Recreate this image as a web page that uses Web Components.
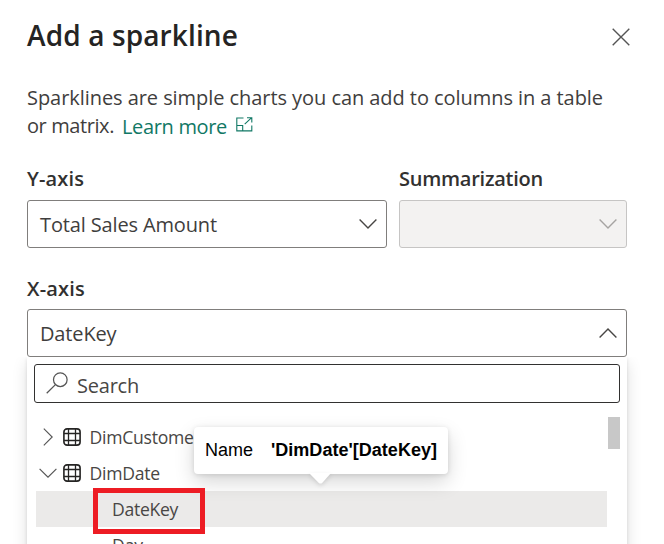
<!DOCTYPE html>
<html lang="en">
<head>
<meta charset="utf-8">
<title>Add a sparkline</title>
<style>
html,body{margin:0;height:544px;overflow:hidden;background:#fff}
body{font-family:"Open Sans","Noto Sans",sans-serif;color:#3f3e3d}
</style>
</head>
<body>
<sparkline-dialog></sparkline-dialog>
<script>
const define=(name,html,init)=>customElements.define(name,class extends HTMLElement{
  constructor(){super();this.attachShadow({mode:'open'}).innerHTML=html;}
  connectedCallback(){if(init)init.call(this,this.shadowRoot);}
});

// Single line of text whose tracking is adjusted to span the given width.
define('fit-text',`<style>:host{display:block;white-space:nowrap}span{display:inline-block;white-space:pre}</style><span><slot></slot></span>`,function(r){
  const s=r.querySelector('span'),n=this.textContent.length;
  s.style.letterSpacing=((+this.getAttribute('width')-s.getBoundingClientRect().width)/n)+'px';
});

const icons={
  close:[18,18,'<path d="M.7.7 17.3 17.3M17.3.7.7 17.3" stroke-width="1.4"/>'],
  down:[18,10,'<path d="M.6.6 9 9 17.4.6" stroke-width="1.4"/>'],
  up:[18,10,'<path d="M.6 9.4 9 1 17.4 9.4" stroke-width="1.4"/>'],
  right:[10,18,'<path d="M.8.6 9.2 9 .8 17.4" stroke-width="1.15"/>'],
  open:[18,10,'<path d="M.6.8 9 9.2 17.4.8" stroke-width="1.15"/>'],
  search:[22,22,'<circle cx="14.3" cy="7.7" r="6.8" stroke-width="1.25"/><path d="M9.4 12.6.7 21.3" stroke-width="1.25"/>'],
  table:[18,18,'<rect x=".9" y=".9" width="16.2" height="16.2" rx="3.2" stroke-width="1.6"/><path d="M5.5 1V17M12.5 1V17M1 5.5H17M1 12.5H17" stroke-width="1.3"/>'],
  popout:[17,15,'<path d="M7.5 1H.8V13.9H15.8V8.5M.8 8.5H6.7V13.9M8.7 7.2 15.4.9M11 .8H15.8V5.5" stroke-width="1.1"/>']
};
define('line-icon','<style>:host{display:block;flex:none}svg{display:block;fill:none;stroke:currentColor}</style>',function(r){
  const [w,h,p]=icons[this.getAttribute('name')];
  r.innerHTML+=`<svg width="${w}" height="${h}" viewBox="0 0 ${w} ${h}">${p}</svg>`;
});

define('form-field',`<style>
:host{display:block}
.label{font-size:20px;line-height:28px;font-weight:600;height:35px;color:#323130}
:host([wide]) .label{height:34px}
.box{box-sizing:border-box;height:48px;border:1px solid #807e7c;border-radius:3px;padding:0 9px 0 12px;display:flex;align-items:center;justify-content:space-between;font-size:20px;line-height:28px}
.value{padding-top:2px}
:host([disabled]) .box{background:#f3f2f1;border-color:#c6c5c4;color:#a6a4a2}
</style><div class="label"><slot name="label"></slot></div><div class="box"><div class="value"><slot></slot></div><slot name="icon"></slot></div>`);

define('search-box',`<style>
:host{display:flex;box-sizing:border-box;height:39px;border:1px solid #323130;border-radius:3px;padding:0 11px;align-items:center;gap:9px;font-size:20px;line-height:28px;color:#484644}
line-icon{margin-top:-1px;color:#555;}fit-text{margin-top:4px}
</style><line-icon name="search"></line-icon><fit-text width="62">Search</fit-text>`);

define('tree-row',`<style>
:host{display:flex;height:36px;width:571px;box-sizing:border-box;align-items:center;font-size:17.6px;line-height:24px;color:#484644}
:host([selected]){background:#ebeae9}
:host([leaf]){padding-left:76px}
.chev{width:27px;display:flex;justify-content:center;padding-right:3px;box-sizing:border-box;color:#555}
.icon{width:26.5px;color:#252423}
:host([leaf]) .chev,:host([leaf]) .icon{display:none}
.text{padding-bottom:1px}
</style><div class="chev"></div><div class="icon"><line-icon name="table"></line-icon></div><div class="text"><slot></slot></div>`,function(r){
  if(!this.hasAttribute('leaf'))r.querySelector('.chev').innerHTML=`<line-icon name="${this.hasAttribute('expanded')?'open':'right'}"></line-icon>`;
});

define('drop-panel',`<style>
:host{display:block;box-sizing:border-box;height:210px;padding:7px 7px 0;box-shadow:0 6.4px 14.4px rgba(0,0,0,.13),0 1.2px 3.6px rgba(0,0,0,.11);clip-path:inset(0 -30px -30px -30px)}
.scroll{display:flex;justify-content:space-between;margin-top:14px;padding-left:2px}
.thumb{width:12px;height:32px;background:#c8c8c8}
.rows{padding-top:2px}
</style><search-box></search-box><div class="scroll"><div class="rows"><slot></slot></div><div class="thumb"></div></div>`);

define('name-tip',`<style>
:host{position:absolute;left:194px;top:427px;width:254px;height:47px;box-sizing:border-box;background:#fff;border-radius:4px;box-shadow:0 8px 20px rgba(0,0,0,.16),0 1px 5px rgba(0,0,0,.12);padding:0 11px 1px;display:flex;align-items:center;gap:18px;font:18px "Liberation Sans",Arial,sans-serif;color:#000}
b{font-weight:700}
svg{position:absolute;left:116px;top:46px;filter:drop-shadow(0 2px 2px rgba(0,0,0,.12))}
</style><fit-text width="48">Name</fit-text><b><fit-text width="166">'DimDate'[DateKey]</fit-text></b>
<svg width="22" height="12"><path d="M0 0H21L12.4 9.7Q10.5 11.5 8.6 9.7L0 1Z" fill="#fff"/></svg>`);

define('red-frame','<style>:host{position:absolute;left:93px;top:488px;width:112px;height:46px;box-sizing:border-box;border:5px solid #ed1c24}</style>');

define('sparkline-dialog',`<style>
:host{display:block;position:relative;box-sizing:border-box;height:544px;overflow:hidden;padding:16px 37px 0 27px}
header{display:flex;justify-content:space-between;height:68px}
h1{margin:0;font-size:28px;line-height:38px;font-weight:600;color:#252423}
header line-icon{margin:12px -3px 0 0;color:#555}
.intro{font-size:20px;line-height:28px;height:81px}
.line{display:flex}
a{display:flex;color:#117865;margin-left:8px;padding-top:1px;gap:9px}
a line-icon{margin-top:4px}
.fields{display:grid;grid-template-columns:360px 228px;gap:12px;height:110px}
.caret{color:#484644}.pale{color:#a6a4a2}
</style>
<header><h1><fit-text width="211">Add a sparkline</fit-text></h1><line-icon name="close"></line-icon></header>
<div class="intro"><fit-text width="576">Sparklines are simple charts you can add to columns in a table</fit-text>
<div class="line"><fit-text width="87">or matrix.</fit-text><a><fit-text width="105">Learn more</fit-text><line-icon name="popout"></line-icon></a></div></div>
<div class="fields">
<form-field><fit-text slot="label" width="57">Y-axis</fit-text><fit-text width="177">Total Sales Amount</fit-text><line-icon class="caret" slot="icon" name="down"></line-icon></form-field>
<form-field disabled><fit-text slot="label" width="144">Summarization</fit-text><line-icon class="pale" slot="icon" name="down"></line-icon></form-field>
</div>
<form-field wide><fit-text slot="label" width="58">X-axis</fit-text><fit-text width="76.5">DateKey</fit-text><line-icon class="caret" slot="icon" name="up"></line-icon></form-field>
<drop-panel>
<tree-row><fit-text width="111">DimCustomer</fit-text></tree-row>
<tree-row expanded><fit-text width="70.5">DimDate</fit-text></tree-row>
<tree-row leaf selected><fit-text width="66">DateKey</fit-text></tree-row>
<tree-row leaf><fit-text width="31">Day</fit-text></tree-row>
</drop-panel>
<name-tip></name-tip><red-frame></red-frame>`);
</script>
</body>
</html>
